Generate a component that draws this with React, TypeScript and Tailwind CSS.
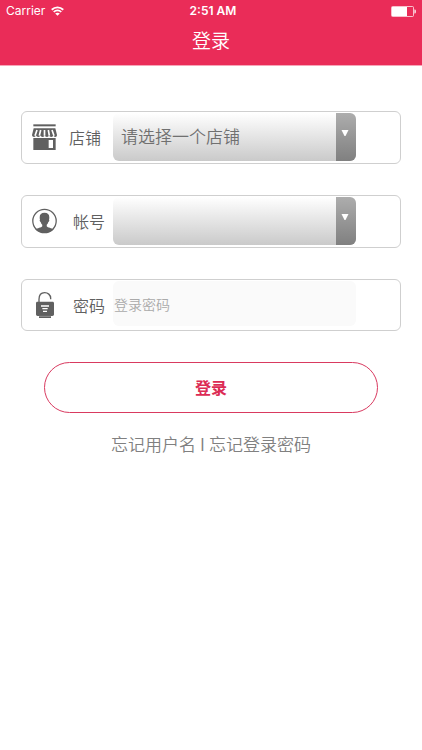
import React, { useState } from "react";

function WifiIcon() {
  return (
    <svg className="h-[10px] w-[13px]" viewBox="0 0 26 20" fill="none" stroke="#fff" strokeWidth="3.6" aria-hidden="true">
      <path d="M1.5 7.5C8 1 18 1 24.5 7.5" />
      <path d="M5.5 12C9.7 7.5 16.3 7.5 20.5 12" />
      <path d="M13 19.5l-4.6-4.6c2.4-2.2 6.8-2.2 9.2 0z" fill="#fff" stroke="none" />
    </svg>
  );
}

function BatteryIcon() {
  return (
    <svg className="h-[11px] w-[25px]" viewBox="0 0 25 11" aria-hidden="true">
      <rect x="0.5" y="0.5" width="22" height="10" rx="1" fill="none" stroke="#fff" strokeOpacity="0.7" />
      <rect x="1" y="1" width="15" height="9" fill="#fff" />
      <path d="M23.3 3.5h.7c.6 0 1 .8 1 2s-.4 2-1 2h-.7z" fill="#fff" fillOpacity="0.8" />
    </svg>
  );
}

function StoreIcon() {
  return (
    <svg className="h-[26px] w-[25px]" viewBox="0 0 75 78" fill="#606060" aria-hidden="true">
      <path d="M4 1h67v6H4z" />
      <path d="M5 13h65l5 20c0 4-2 6-5 6s-5-2-6-5c-1 3-3 5-6 5s-6-2-7-5c-1 3-3 5-6 5s-6-2-7-5c-1 3-3 5-6 5s-6-2-7-5c-1 3-3 5-6 5s-6-2-7-5c-1 3-3 5-6 5s-6-2-6-6z" />
      <path d="M15 18l-6 17M26 18l-4 17M37.500 18v17M49 18l3 17M60 18l6 17" stroke="#fff" strokeWidth="5" />
      <path d="M4 42h67v36H4z" />
      <path d="M50 48h13v24H50z" fill="#fff" />
    </svg>
  );
}

function AccountIcon() {
  return (
    <svg className="h-[26px] w-[25px]" viewBox="0 0 78 78" aria-hidden="true">
      <circle cx="39" cy="39" r="36.500" fill="none" stroke="#606060" strokeWidth="4" />
      <path
        d="M39 13c-10 0-15 5-15 14 0 3 0 5 1 7-2 1-1 6 2 8 1 4 3 7 5 9v4c-3 5-15 5-22 10 7 8 18 11 29 11s22-3 29-11c-7-5-19-5-22-10v-4c2-2 4-5 5-9 3-2 4-7 2-8 1-2 1-4 1-7 0-9-5-14-15-14z"
        fill="#606060"
      />
    </svg>
  );
}

function LockIcon() {
  return (
    <svg className="mx-1 h-[26px] w-[18px]" viewBox="0 0 54 78" aria-hidden="true">
      <path d="M9 30V22C9 8 17 2 26 2s18 6 18 17v3" fill="none" stroke="#606060" strokeWidth="4" />
      <path d="M4 29h46c2 0 4 2 4 4v34c0 3-2 5-5 5h-4v6H9v-6H5c-3 0-5-2-5-5V33c0-2 2-4 4-4z" fill="#606060" />
      <path d="M9 73h36" stroke="#aaa" strokeWidth="2" />
      <path d="M15 42h24M19 50h16M21 58h12" stroke="#fff" strokeWidth="4" />
    </svg>
  );
}

interface SelectBoxProps {
  id: string;
  value: string;
  options: string[];
  onChange: (value: string) => void;
}

function SelectBox({ id, value, options, onChange }: SelectBoxProps) {
  return (
    <div className="relative mt-px mb-0.5 mr-11 min-w-0 flex-1">
      <select
        id={id}
        className="h-12 w-full appearance-none rounded-md bg-linear-to-b from-white to-[#cacaca] pr-6 pb-0.5 pl-2 text-[17px] font-[350] text-[#707070] outline-none"
        value={value}
        onChange={(e) => onChange(e.target.value)}
      >
        {options.map((o) => (
          <option key={o} value={o}>{o}</option>
        ))}
      </select>
      <span className="pointer-events-none absolute inset-y-0 right-0 flex w-5 justify-center rounded-r-md bg-linear-to-b from-[#adadad] to-[#808080] pt-4 pr-0.5">
        <svg className="h-2 w-2" viewBox="0 0 8 8" fill="#fff" aria-hidden="true">
          <path d="M0.500 1h7L4.500 7h-1z" />
        </svg>
      </span>
    </div>
  );
}

export default function App() {
  const [shop, setShop] = useState("请选择一个店铺");
  const [account, setAccount] = useState("");
  const [password, setPassword] = useState("");

  return (
    <div className="min-h-screen bg-white font-['Noto_Sans_CJK_SC',sans-serif]">
      <header className="border-b border-[#f7a5b8] bg-[#ea2c58] text-white">
        <div className="grid h-[22px] grid-cols-3 items-center px-1.5 font-['Inter',sans-serif] text-xs">
          <div className="flex items-center gap-1.5">
            <span>Carrier</span>
            <WifiIcon />
          </div>
          <span className="pl-1 text-center font-semibold">2:51 AM</span>
          <div className="flex justify-end">
            <BatteryIcon />
          </div>
        </div>
        <h1 className="h-[43px] text-center text-[19px] leading-[36px] font-[350]">登录</h1>
      </header>

      <main className="px-[21px] pt-[45px]">
        <form onSubmit={(e) => e.preventDefault()}>
          <div className="flex flex-col gap-[31px]">
            <div className="flex rounded-md border border-[#cfcfcf]">
              <label htmlFor="shop" className="flex w-[91px] items-center justify-between pr-3 pb-0.5 pl-2.5 font-[350] text-[#606060]">
                <StoreIcon />
                店铺
              </label>
              <SelectBox id="shop" value={shop} options={["请选择一个店铺"]} onChange={setShop} />
            </div>

            <div className="flex rounded-md border border-[#cfcfcf]">
              <label htmlFor="account" className="flex w-[91px] items-center justify-between pr-2 pb-0.5 pl-2.5 font-[350] text-[#606060]">
                <AccountIcon />
                帐号
              </label>
              <SelectBox id="account" value={account} options={[""]} onChange={setAccount} />
            </div>

            <div className="flex rounded-md border border-[#cfcfcf]">
              <label htmlFor="password" className="flex w-[91px] items-center justify-between pr-2 pl-2.5 font-[350] text-[#606060]">
                <LockIcon />
                密码
              </label>
              <input
                id="password"
                type="password"
                placeholder="登录密码"
                className="mt-px mr-11 mb-1 h-[45px] min-w-0 flex-1 rounded-md bg-[#fafafa] pl-px text-sm font-[350] text-[#555] outline-none placeholder:text-[#aaa]"
                value={password}
                onChange={(e) => setPassword(e.target.value)}
              />
            </div>
          </div>

          <div className="mt-[31px] px-[23px]">
            <button type="submit" className="h-[51px] w-full rounded-full border border-[#d93a60] pb-0.5 font-bold text-[#dc2c55]">
              登录
            </button>
          </div>
        </form>

        <nav className="mt-[18px] flex justify-center gap-1 text-[17px] font-[350] text-[#808080]">
          <a href="#forgot-username">忘记用户名</a>
          <span>I</span>
          <a href="#forgot-password">忘记登录密码</a>
        </nav>
      </main>
    </div>
  );
}
